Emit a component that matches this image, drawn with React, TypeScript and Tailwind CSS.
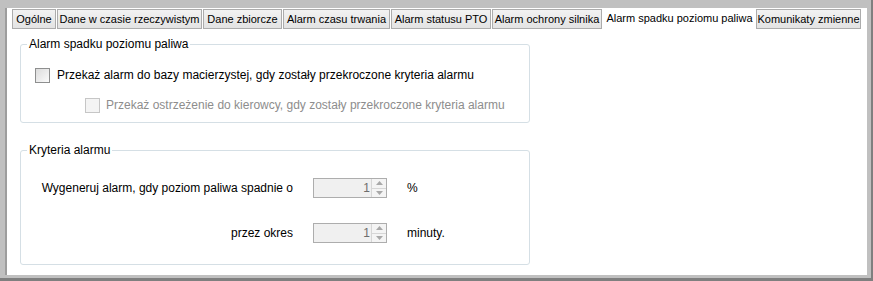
import { useState } from 'react'

const TABS = [
  { label: 'Ogólne', w: 'w-[44px]' },
  { label: 'Dane w czasie rzeczywistym', w: 'w-[145px]' },
  { label: 'Dane zbiorcze', w: 'w-[79px]' },
  { label: 'Alarm czasu trwania', w: 'w-[107px]' },
  { label: 'Alarm statusu PTO', w: 'w-[100px]' },
  { label: 'Alarm ochrony silnika', w: 'w-[110px]' },
  { label: 'Alarm spadku poziomu paliwa', w: 'w-[153px]' },
  { label: 'Komunikaty zmienne', w: 'w-[105px]' },
]

const ACTIVE = 'Alarm spadku poziomu paliwa'

function Checkbox({ disabled, checked }: { disabled?: boolean; checked?: boolean }) {
  return (
    <span
      className={
        disabled
          ? 'w-[15px] h-[15px] border border-[#c6c6c6] bg-[#f4f4f4] shrink-0'
          : 'w-[15px] h-[15px] border border-[#8e8f8f] bg-gradient-to-br from-[#dcdcdc] to-[#fbfbfb] shrink-0 p-[2px]'
      }
    >
      {checked && <span className="block w-full h-full bg-[#333]" />}
    </span>
  )
}

function SpinBox({ value }: { value: number }) {
  return (
    <div className="w-[74px] h-[20px] border border-[#adadad] bg-[#f0f0f0] flex">
      <span className="flex-1 text-right pr-[1px] text-[#6d6d6d] leading-[18px]">{value}</span>
      <div className="w-[15px] flex flex-col border-l border-[#d6d6d6]">
        <div className="flex-1 flex items-center justify-center border-b border-[#d6d6d6] bg-[#f4f4f4]">
          <svg width="7" height="4" viewBox="0 0 7 4">
            <path d="M0 4 L3.5 0 L7 4 Z" fill="#a8a8a8" />
          </svg>
        </div>
        <div className="flex-1 flex items-center justify-center bg-[#f4f4f4]">
          <svg width="7" height="4" viewBox="0 0 7 4">
            <path d="M0 0 L3.5 4 L7 0 Z" fill="#a8a8a8" />
          </svg>
        </div>
      </div>
    </div>
  )
}

function GroupBox({ title, className, children }: { title: string; className: string; children: React.ReactNode }) {
  return (
    <fieldset className={`w-[510px] border border-[#d5dfe5] rounded-[3px] ${className}`}>
      <legend className="ml-[6px] px-[2px] leading-[14px]">{title}</legend>
      {children}
    </fieldset>
  )
}

export default function App() {
  const [active, setActive] = useState(ACTIVE)

  return (
    <div className="w-[873px] h-[281px] bg-[#c0c0c0] pt-[8px] pl-[5px] pr-[4px] pb-[3px] border-r-2 border-b-[3px] border-[#7f7f7f] flex font-['Liberation_Sans',Arial,sans-serif] text-[12px] text-black">
      <div className="flex-1 bg-white border-l-2 border-[#9d9d9d] flex flex-col">
        {/* tab strip */}
        <div className="flex items-start pl-[5px] h-[22px]">
          {TABS.map((t) =>
            t.label === active ? (
              <button
                key={t.label}
                onClick={() => setActive(t.label)}
                className={`${t.w} h-[22px] bg-white text-[11px] text-center leading-[18px] pb-[2px]`}
              >
                {t.label}
              </button>
            ) : (
              <button
                key={t.label}
                onClick={() => setActive(t.label)}
                className={`${t.w} h-[20px] mt-[1px] mr-[1px] border border-[#acacac] bg-gradient-to-b from-[#f2f2f2] to-[#e3e3e3] text-[11px] text-center leading-[17px] whitespace-nowrap`}
              >
                {t.label}
              </button>
            )
          )}
        </div>

        <div className="pl-[13px] pt-[7px]">
          <GroupBox title="Alarm spadku poziomu paliwa" className="h-[86px]">
            <label className="flex items-center gap-[7px] mt-[15px] ml-[14px]">
              <Checkbox />
              <span>Przekaż alarm do bazy macierzystej, gdy zostały przekroczone kryteria alarmu</span>
            </label>
            <label className="flex items-center gap-[6px] mt-[12px] ml-[64px] text-[#8d8d8d]">
              <Checkbox disabled />
              <span>Przekaż ostrzeżenie do kierowcy, gdy zostały przekroczone kryteria alarmu</span>
            </label>
          </GroupBox>

          <GroupBox title="Kryteria alarmu" className="h-[122px] mt-[20px]">
            <div className="grid grid-cols-[272px_74px_auto] items-center gap-x-[20px] gap-y-[25px] mt-[21px]">
              <span className="text-right">Wygeneruj alarm, gdy poziom paliwa spadnie o</span>
              <SpinBox value={1} />
              <span>%</span>
              <span className="text-right">przez okres</span>
              <SpinBox value={1} />
              <span>minuty.</span>
            </div>
          </GroupBox>
        </div>
      </div>
    </div>
  )
}
